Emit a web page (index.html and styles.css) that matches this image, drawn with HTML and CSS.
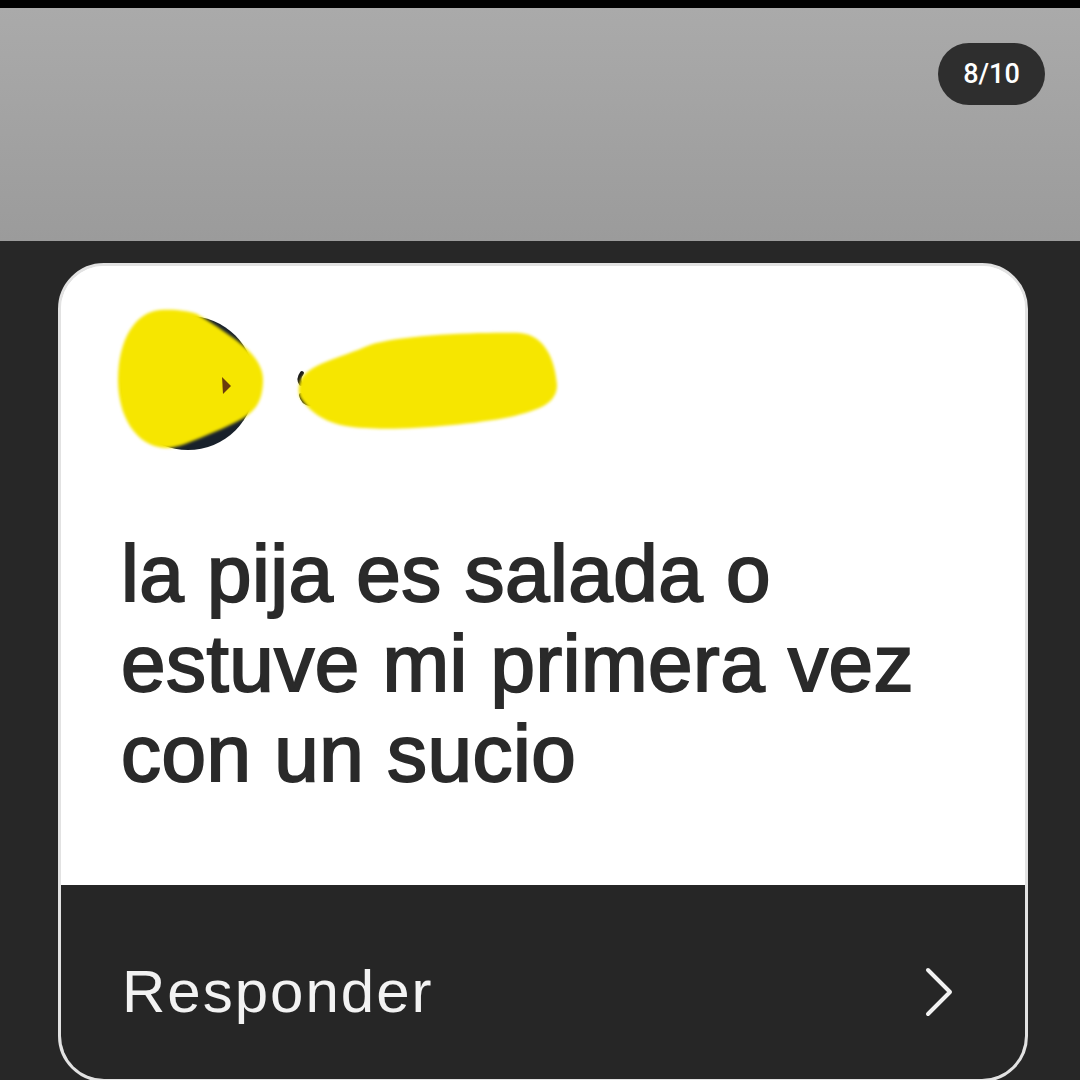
FILE: index.html
```html
<!DOCTYPE html>
<html lang="es">
<head>
<meta charset="utf-8">
<title>Pregunta</title>
<link rel="stylesheet" href="styles.css">
</head>
<body>
  <div class="topbar"></div>
  <header class="banner">
    <div class="counter">8/10</div>
  </header>
  <main class="stage">
    <article class="card">
      <section class="card-body">
        <svg class="censor" width="480" height="160" viewBox="0 0 480 160" aria-hidden="true">
          <defs>
            <filter id="soft" x="-10%" y="-10%" width="120%" height="120%">
              <feGaussianBlur stdDeviation="1.6"/>
            </filter>
          </defs>
          <circle cx="88" cy="83" r="67" fill="#18212b"/>
          <path d="M202,73 C199,77 199,81 201,84" stroke="#1a1a1a" stroke-width="4" fill="none" stroke-linecap="round"/>
          <path d="M201,95 C202,100 205,103 210,104" stroke="#1a1a1a" stroke-width="4" fill="none" stroke-linecap="round"/>
          <g filter="url(#soft)" fill="#f6e600">
            <path d="M60,10 C75,9 88,11 97,14 C115,25 135,38 148,50 C158,60 163,70 163,80 C163,92 160,102 155,108 C150,114 145,117 140,120 C125,128 105,136 90,142 C80,146 72,148 65,148 C35,146 18,115 18,80 C18,40 35,12 60,10 Z"/>
            <path d="M200,82 C205,65 240,58 270,45 C300,35 380,32 420,33 C445,35 455,60 457,85 C457,103 440,110 410,117 C370,125 300,131 265,128 C235,127 215,118 202,100 C198,95 198,88 200,82 Z"/>
          </g>
          <polygon points="122,77 131,86 123,94" fill="#6b3c0c"/>
        </svg>
        <p class="question">la pija es salada o<br>estuve mi primera vez<br>con un sucio</p>
      </section>
      <footer class="card-foot">
        <span class="reply">Responder</span>
        <svg class="chevron" width="30" height="52" viewBox="0 0 30 52" aria-hidden="true">
          <path d="M4,4 L26,26 L4,48" fill="none" stroke="#f2f2f2" stroke-width="4" stroke-linecap="round" stroke-linejoin="round"/>
        </svg>
      </footer>
    </article>
  </main>
</body>
</html>
```

FILE: styles.css
```css
html, body {
  margin: 0;
  padding: 0;
}

body {
  width: 1080px;
  height: 1080px;
  overflow: hidden;
  background: #272727;
  font-family: "Liberation Sans", Arial, sans-serif;
}

.topbar {
  height: 8px;
  background: #000;
}

.banner {
  height: 233px;
  box-sizing: border-box;
  background: linear-gradient(180deg, #aaaaaa 0%, #9b9b9b 100%);
  display: flex;
  justify-content: flex-end;
  align-items: flex-start;
  padding: 35px 35px 0 0;
}

.counter {
  width: 107px;
  height: 62px;
  border-radius: 31px;
  background: #2e2e2e;
  color: #ffffff;
  font-family: Roboto, "Liberation Sans", sans-serif;
  font-weight: 500;
  font-size: 27px;
  display: flex;
  align-items: center;
  justify-content: center;
}

.stage {
  padding: 22px 0 0 58px;
}

.card {
  width: 970px;
  height: 819px;
  box-sizing: border-box;
  border: 3px solid #e2e2e2;
  border-radius: 46px;
  background: #ffffff;
  overflow: hidden;
  display: flex;
  flex-direction: column;
}

.card-body {
  height: 619px;
  background: #ffffff;
  display: flex;
  flex-direction: column;
}

.censor {
  display: block;
  margin: 34px 0 0 39px;
}

.question {
  margin: 69px 0 0 60px;
  font-size: 80px;
  line-height: 90px;
  color: #2a2a2a;
  -webkit-text-stroke: 2px #2a2a2a;
  letter-spacing: 0.5px;
}

.card-foot {
  flex: 1;
  background: #262626;
  display: flex;
  align-items: center;
  justify-content: space-between;
  padding: 20px 71px 0 61px;
}

.reply {
  color: #f2f2f2;
  font-size: 60px;
  line-height: 60px;
  letter-spacing: 2px;
}

.chevron {
  display: block;
}
```
